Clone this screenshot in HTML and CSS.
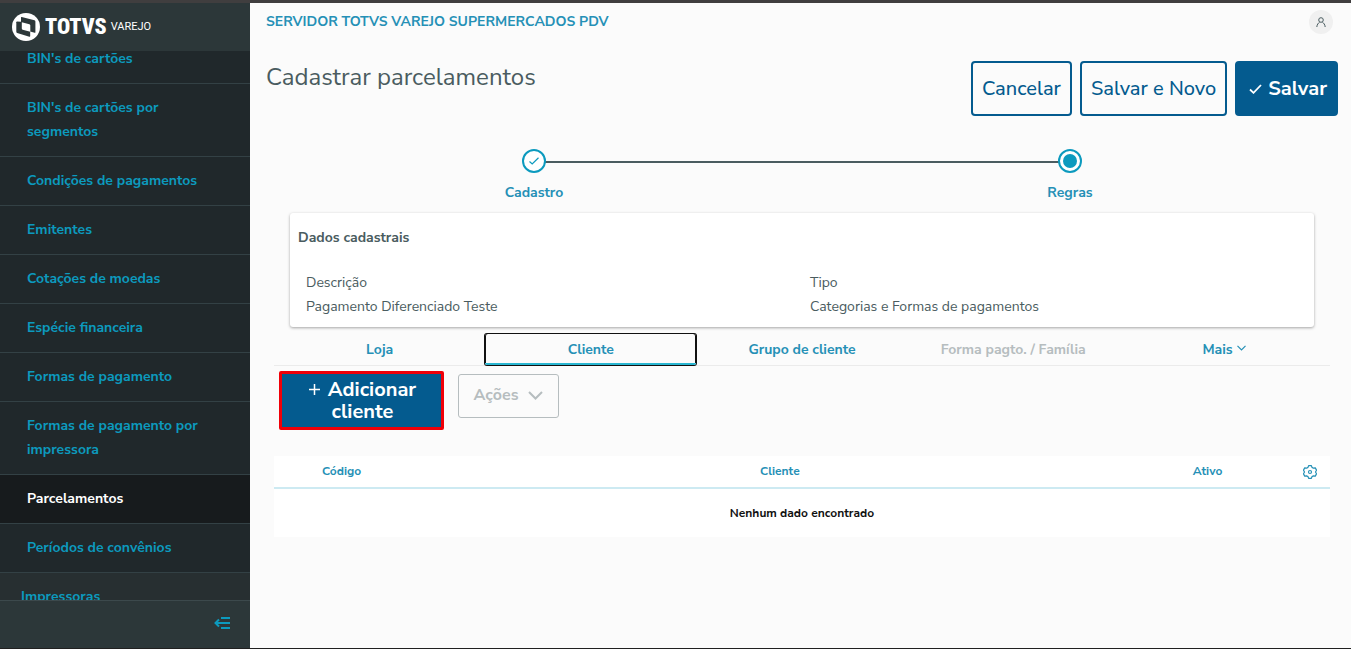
FILE: index.html
```
<!DOCTYPE html>
<html lang="pt-BR">
<head>
<meta charset="utf-8">
<meta name="viewport" content="width=device-width, initial-scale=1">
<title>Cadastrar parcelamentos</title>
<link rel="stylesheet" href="styles.css">
</head>
<body>
<div class="app">
  <aside class="sidebar">
    <div class="brand">
      <svg class="brand-mark" viewBox="0 0 28 28" aria-hidden="true">
        <circle cx="14" cy="14" r="14" fill="#fff"/>
        <g fill="#2c3739">
          <path d="M9 4.500q0-.7.700-.5l12.800 3.300q.9.300.9 1.200v10.800q0 .7-.7.500L9 16z"/>
          <path d="M9 8.800 5 8.500q-.7 0-.7.700v9.600q0 .9.900 1.200l12.200 3.700q.8.200.8-.6V12.500z"/>
        </g>
        <path d="M9.800 9.300l7.600 1.900q.9.300.9 1.200v6.300l-7.600-2q-.9-.3-.9-1.200z" fill="#fff"/>
      </svg>
      <span class="brand-name">TOTVS</span>
      <span class="brand-sub">VAREJO</span>
    </div>
    <nav class="menu" aria-label="Menu">
      <ul class="menu-list">
        <li><a class="menu-link" href="#">BIN's de cartões</a></li>
        <li><a class="menu-link" href="#">BIN's de cartões por segmentos</a></li>
        <li><a class="menu-link" href="#">Condições de pagamentos</a></li>
        <li><a class="menu-link" href="#">Emitentes</a></li>
        <li><a class="menu-link" href="#">Cotações de moedas</a></li>
        <li><a class="menu-link" href="#">Espécie financeira</a></li>
        <li><a class="menu-link" href="#">Formas de pagamento</a></li>
        <li><a class="menu-link" href="#">Formas de pagamento por impressora</a></li>
        <li><a class="menu-link menu-link-active" href="#" aria-current="page">Parcelamentos</a></li>
        <li><a class="menu-link" href="#">Períodos de convênios</a></li>
        <li><a class="menu-link menu-link-parent" href="#">Impressoras</a></li>
      </ul>
    </nav>
    <div class="menu-footer">
      <button class="icon-button" type="button" aria-label="Recolher menu">
        <svg width="16" height="14" viewBox="0 0 16 14" fill="none" stroke="currentColor" stroke-width="2" aria-hidden="true"><path d="M7 2h9M1 7h15M7 12h9"/><path d="M5 3.500 1.500 7 5 10.500"/></svg>
      </button>
    </div>
  </aside>

  <main class="main">
    <header class="topbar">
      <span class="product">SERVIDOR TOTVS VAREJO SUPERMERCADOS PDV</span>
      <button class="avatar" type="button" aria-label="Perfil">
        <svg width="10" height="10" viewBox="0 0 10 10" fill="none" stroke="#4a5c60" aria-hidden="true"><circle cx="5" cy="3" r="2.300"/><path d="M.8 10C1 7.500 2.500 5.800 3.600 5.200M9.200 10C9 7.500 7.500 5.800 6.400 5.200"/></svg>
      </button>
    </header>

    <div class="page-head">
      <h1 class="page-title">Cadastrar parcelamentos</h1>
      <div class="actions">
        <button class="btn" type="button">Cancelar</button>
        <button class="btn" type="button">Salvar e Novo</button>
        <button class="btn btn-primary" type="button">
          <svg width="13" height="10" viewBox="0 0 13 10" fill="none" stroke="currentColor" stroke-width="1.800" aria-hidden="true"><path d="M1 5.500 4.500 8.800 12 1"/></svg>
          Salvar
        </button>
      </div>
    </div>

    <ol class="stepper">
      <li class="step">
        <span class="step-mark"><svg width="10" height="8" viewBox="0 0 10 8" fill="none" stroke="currentColor" stroke-width="1.200" aria-hidden="true"><path d="M.5 4.500 3.200 7 9.500.8"/></svg></span>
        <span>Cadastro</span>
      </li>
      <li class="step">
        <span class="step-mark"><span class="step-dot"></span></span>
        <span>Regras</span>
      </li>
    </ol>

    <section class="card">
      <h2 class="card-title">Dados cadastrais</h2>
      <dl class="fields">
        <div><dt>Descrição</dt><dd>Pagamento Diferenciado Teste</dd></div>
        <div><dt>Tipo</dt><dd>Categorias e Formas de pagamentos</dd></div>
      </dl>
    </section>

    <section class="panel">
      <div class="tabs" role="tablist">
        <button class="tab" type="button" role="tab">Loja</button>
        <button class="tab tab-active" type="button" role="tab" aria-selected="true">Cliente</button>
        <button class="tab" type="button" role="tab">Grupo de cliente</button>
        <button class="tab" type="button" role="tab" disabled>Forma pagto. / Família</button>
        <button class="tab" type="button" aria-haspopup="true">Mais
          <svg width="9" height="6" viewBox="0 0 9 6" fill="none" stroke="currentColor" stroke-width="1.200" aria-hidden="true"><path d="m.5.8 4 4 4-4"/></svg>
        </button>
      </div>
      <div class="toolbar">
        <button class="btn-add" type="button"><svg width="11" height="11" viewBox="0 0 11 11" stroke="currentColor" stroke-width="1.500" aria-hidden="true"><path d="M5.500 0v11M0 5.500h11"/></svg>Adicionar cliente</button>
        <button class="btn-menu" type="button" disabled>Ações
          <svg width="15" height="9" viewBox="0 0 15 9" fill="none" stroke="currentColor" stroke-width="2" aria-hidden="true"><path d="m1 1 6.500 6.500L14 1"/></svg>
        </button>
      </div>
      <table class="grid">
        <colgroup><col class="col-code"><col class="col-client"><col class="col-active"><col class="col-settings"></colgroup>
        <thead>
          <tr>
            <th scope="col">Código</th>
            <th scope="col">Cliente</th>
            <th scope="col">Ativo</th>
            <th class="settings"><button class="icon-button" type="button" aria-label="Configurar colunas">
              <svg width="14" height="14" viewBox="0 0 14 14" fill="none" stroke="currentColor" stroke-width="1.200" stroke-linejoin="round" aria-hidden="true"><path d="M5.600.7h2.800l.6 1.700 1.500.8 1.800-.3 1.200 2.300-1 1.800 1 1.800-1.200 2.300-1.800-.3-1.500.8-.6 1.700H5.600L5 11.600l-1.500-.8-1.800.3L.5 8.800 1.500 7l-1-1.800 1.200-2.300 1.800.3L5 2.400z"/><circle cx="7" cy="7" r="1.500"/></svg>
            </button></th>
          </tr>
        </thead>
        <tbody>
          <tr><td class="empty" colspan="4">Nenhum dado encontrado</td></tr>
        </tbody>
      </table>
    </section>
  </main>
</div>
</body>
</html>
```
FILE: styles.css
```
:root {
  --cyan: #0c9abe;
  --link: #2590b6;
  --blue: #045b8f;
  --ink: #4a5c60;
  --muted: #b6bdbf;
}

* { box-sizing: border-box; }

body {
  margin: 0;
  font-family: "Nunito Sans", "Open Sans", sans-serif;
  font-size: 14px;
  line-height: 24px;
  color: var(--ink);
  background: #fbfbfb;
}

button {
  font-family: inherit;
  margin: 0;
  padding: 0;
  border: 0;
  background: none;
  color: inherit;
}

ul, ol, dl, dd { margin: 0; padding: 0; list-style: none; }

.app {
  display: flex;
  height: 100vh;
  border-top: 3px solid #403e3f;
  border-bottom: 1px solid #202020;
}

/* Sidebar */
.sidebar {
  display: flex;
  flex: 0 0 250px;
  flex-direction: column;
  background: #2c3739;
}

.brand {
  display: flex;
  flex: 0 0 48px;
  align-items: center;
  padding-left: 12px;
  color: #fff;
}

.brand-mark { width: 28px; height: 28px; margin-right: 5px; }

.brand-name {
  font-family: Roboto, sans-serif;
  font-size: 22px;
  font-weight: 900;
  font-stretch: condensed;
  margin-right: 4px;
}

.brand-sub {
  font-family: "Liberation Sans Narrow", Roboto, sans-serif;
  font-size: 11px;
}

.menu { flex: 1; min-height: 0; overflow: hidden; background: #20282b; }

/* List is shown slightly scrolled */
.menu-list { margin-top: -16px; }

.menu-link {
  display: block;
  padding: 12px 27px;
  border-bottom: 1px solid #334145;
  font-weight: 700;
  color: var(--cyan);
  text-decoration: none;
}

.menu-link-active { background: #171b1d; color: #fff; }
.menu-link-parent { padding-left: 21px; background: #272f31; }

.menu-footer {
  display: flex;
  flex: 0 0 48px;
  align-items: center;
  justify-content: flex-end;
  padding: 0 20px 4px 0;
  border-top: 1px solid #3c494c;
  color: var(--cyan);
}

.icon-button { display: inline-flex; }

/* Main area */
.main { flex: 1; min-width: 0; padding: 7px 13px 0 16px; overflow: hidden; }

.topbar {
  display: flex;
  align-items: flex-start;
  justify-content: space-between;
  padding-right: 5px;
}

.product { font-weight: 700; color: var(--link); }

.avatar {
  display: flex;
  align-items: center;
  justify-content: center;
  width: 24px;
  height: 24px;
  border-radius: 50%;
  background: #f0f0f0;
}

.page-head {
  display: flex;
  align-items: flex-start;
  justify-content: space-between;
  margin-top: 27px;
}

.page-title {
  margin: 0;
  font-size: 24px;
  font-weight: 400;
  line-height: 32px;
}

.actions { display: flex; gap: 8px; }

.btn {
  display: flex;
  align-items: center;
  justify-content: center;
  gap: 6px;
  height: 55px;
  padding: 0 9px;
  border: 2px solid var(--blue);
  border-radius: 4px;
  font-size: 20px;
  font-weight: 500;
  color: var(--blue);
}

.btn-primary {
  padding: 0 9px 0 12px;
  background: var(--blue);
  font-weight: 700;
  color: #fff;
}

/* Stepper */
.stepper { display: flex; margin-top: 33px; }

.step {
  position: relative;
  display: flex;
  flex: 1;
  flex-direction: column;
  align-items: center;
  gap: 8px;
  font-weight: 700;
  color: var(--link);
}

.step + .step::before {
  content: "";
  position: absolute;
  top: 12px;
  right: 50%;
  width: 100%;
  height: 2px;
  background: var(--ink);
}

.step-mark {
  position: relative;
  z-index: 1;
  display: flex;
  align-items: center;
  justify-content: center;
  width: 24px;
  height: 24px;
  border: 2px solid var(--cyan);
  border-radius: 50%;
  background: #fff;
  color: var(--cyan);
}

.step-dot { width: 14px; height: 14px; border-radius: 50%; background: var(--cyan); }

/* Summary card */
.card {
  margin: 8px 24px 0;
  padding: 13px 8px 8px;
  border-radius: 3px;
  background: #fff;
  box-shadow: 0 1px 3px rgba(0, 0, 0, .35);
}

.card-title { margin: 0; font-size: 14px; font-weight: 700; line-height: 24px; }

.fields { display: grid; grid-template-columns: 1fr 1fr; margin-top: 21px; }
.fields > div { padding: 0 8px; }

/* Tabs */
.panel { margin: 7px 8px 0; }

.tabs {
  display: grid;
  grid-template-columns: repeat(5, 1fr);
  border-bottom: 1px solid #ebebeb;
}

.tab {
  height: 31px;
  font-size: 14px;
  font-weight: 700;
  line-height: 24px;
  color: var(--link);
}

.tab svg { margin-left: 1px; vertical-align: 3px; }
.tab:disabled { color: var(--muted); }

.tab-active {
  border-bottom: 2px solid #29b6d1;
  border-radius: 2px;
  padding-top: 2px;
  box-shadow: 0 0 0 1px #111, inset 1px 0 #111, inset -1px 0 #111;
}

/* Toolbar */
.toolbar {
  display: flex;
  align-items: flex-start;
  gap: 14px;
  padding: 5px 5px 0;
}

.btn-add {
  width: 165px;
  height: 59px;
  padding: 0 18px 0 20px;
  border: 3px solid #f00008;
  border-radius: 2px;
  background: var(--blue);
  font-size: 20px;
  font-weight: 700;
  line-height: 22px;
  color: #fff;
}

.btn-add svg { margin-right: 8px; vertical-align: 1px; }

.btn-menu {
  display: flex;
  align-items: center;
  justify-content: center;
  gap: 10px;
  width: 101px;
  height: 44px;
  margin-top: 3px;
  padding-bottom: 2px;
  border: 1px solid var(--muted);
  border-radius: 3px;
  font-size: 16px;
  font-weight: 700;
  color: var(--muted);
}

/* Table */
.grid {
  width: 100%;
  margin-top: 26px;
  border-collapse: collapse;
  table-layout: fixed;
  background: #fff;
  font-size: 12px;
}

.col-code { width: 13%; }
.col-client { width: 70%; }
.col-active { width: 11%; }
.col-settings { width: 6%; }

.grid th {
  height: 32px;
  padding: 0 2px 2px 0;
  border-bottom: 2px solid #cdeaf2;
  font-weight: 700;
  color: var(--link);
}

.grid .settings { padding-right: 13px; text-align: right; vertical-align: middle; }
.grid .icon-button { vertical-align: middle; }

.grid .empty {
  height: 49px;
  padding: 0;
  font-weight: 700;
  color: #111;
  text-align: center;
}
```
